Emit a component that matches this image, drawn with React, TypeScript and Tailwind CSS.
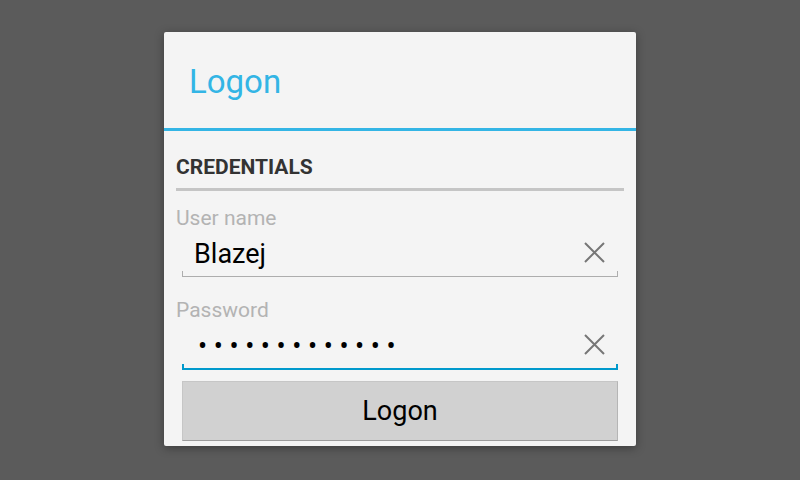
const ClearIcon = () => (
  <svg width="21" height="21" viewBox="0 0 21 21" className="shrink-0 mt-[13px]">
    <path d="M1 1 L20 20 M20 1 L1 20" stroke="#767676" strokeWidth="2" fill="none" />
  </svg>
);

const Field = ({ label, value, focused }: { label: string; value: string; focused?: boolean }) => (
  <div>
    <div className="text-[21px] leading-[21px] text-[#b3b3b3]">{label}</div>
    <div className="mx-[6px]">
      <div className={`flex justify-between pl-[12px] pr-[13px] ${focused ? "h-[43px]" : "h-[42px]"}`}>
        {focused ? (
          <span className="mt-[12px] ml-[4px] text-[27px] leading-[27px] tracking-[6.6px] text-black">{value}</span>
        ) : (
          <span className="mt-[12px] text-[27px] leading-[27px] text-black">{value}</span>
        )}
        <ClearIcon />
      </div>
      {focused ? (
        <div className="h-[6px] border-x-2 border-b-2 border-[#0099cc]" />
      ) : (
        <div className="h-[6px] border-x border-b border-[#adadad]" />
      )}
    </div>
  </div>
);

const App = () => {
  return (
    <div className="h-[480px] w-[800px] bg-[#5b5b5b] pt-[32px] flex justify-center font-['Roboto',sans-serif]">
      <div className="w-[472px] h-[414px] bg-[#f4f4f4] rounded-[2px] shadow-[0_2px_10px_rgba(0,0,0,0.35)]">
        <div className="h-[96px] pl-[25px] pt-[33px] text-[33px] leading-[33px] text-[#33b5e5]">Logon</div>
        <div className="h-[3px] bg-[#33b5e5]" />

        <div className="px-[12px] pt-[26px]">
          <div className="text-[21px] leading-[21px] font-bold text-[#333333]">CREDENTIALS</div>
          <div className="mt-[10px] h-[3px] bg-[#c5c5c5]" />

          <div className="mt-[17px]">
            <Field label="User name" value="Blazej" />
          </div>
          <div className="mt-[23px]">
            <Field label="Password" value={"•".repeat(13)} focused />
          </div>

          <button className="mt-[11px] mx-[6px] w-[436px] h-[60px] flex items-center justify-center bg-[#d1d1d1] border border-[#c6c6c6] border-b-[#9c9c9c] border-r-[#b5b5b5] text-[27px] leading-[27px] text-black">
            Logon
          </button>
        </div>
      </div>
    </div>
  );
};

export default App;
